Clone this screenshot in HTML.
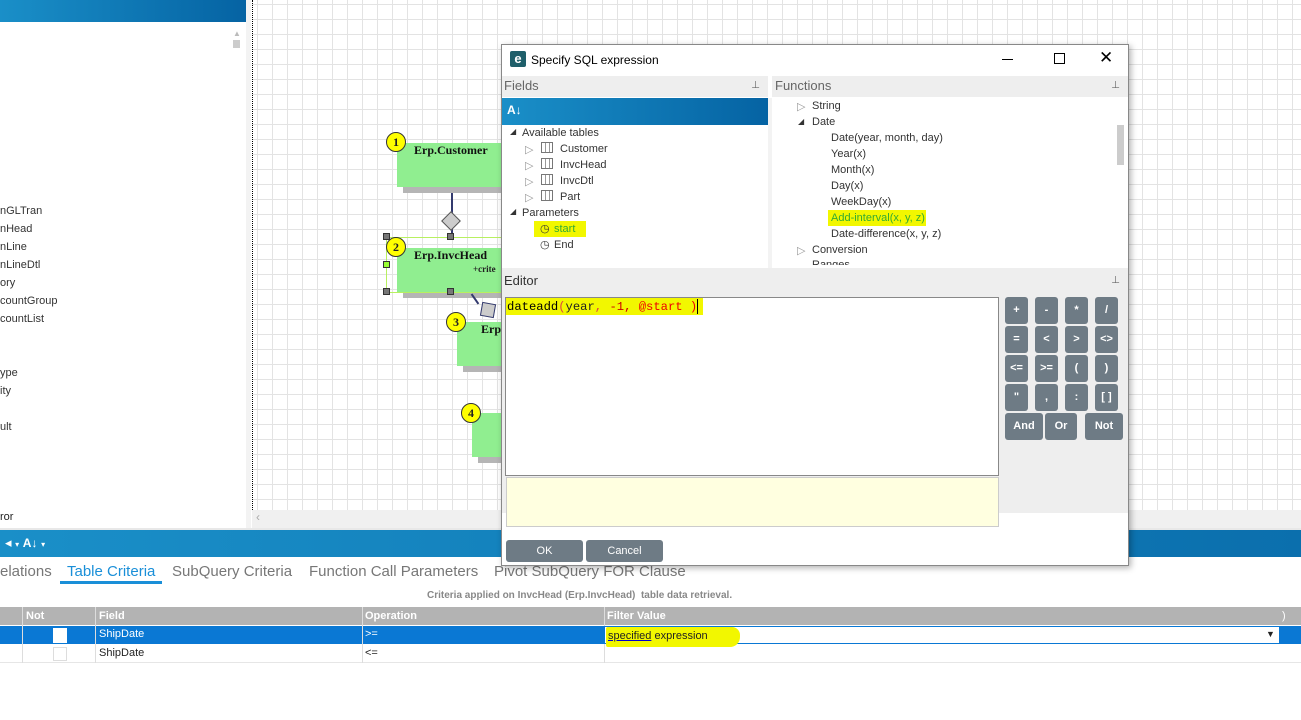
<!DOCTYPE html>
<html><head><style>
*{box-sizing:border-box;margin:0;padding:0}
body{width:1301px;height:720px;position:relative;overflow:hidden;background:#fff;font-family:"Liberation Sans",sans-serif;font-size:11px;color:#222}
.abs{position:absolute}
.grid{background-color:#fff;background-image:linear-gradient(to right,#e3e3e3 1px,transparent 1px),linear-gradient(to bottom,#e3e3e3 1px,transparent 1px);background-size:15px 15px;background-position:4px 4px}
.node{position:absolute;background:#90ee90;box-shadow:6px 6px 0 #b5b5b5}
.num{position:absolute;width:20px;height:20px;border-radius:50%;background:#ffff00;border:1px solid #333;font:bold 12px "Liberation Serif",serif;text-align:center;line-height:18px}
.nt{font:bold 12px "Liberation Serif",serif;color:#111;position:absolute}
.h{position:absolute;width:7px;height:7px;background:#777;border:1px solid #333}
.tree div{position:absolute;font-size:11px;color:#333;white-space:nowrap}
.btn{position:absolute;width:23px;height:27px;background:#6e7b85;border-radius:3px;color:#fff;font-weight:bold;font-size:11px;text-align:center;line-height:27px}
.tbl{position:absolute;font-size:11px}
</style></head><body>
<div class="abs" style="left:0;top:0;width:246px;height:22px;background:linear-gradient(to right,#1a8fc8,#0563a3)"></div>
<div class="abs" style="left:246px;top:0;width:5px;height:528px;background:#f3f3f3"></div>
<div class="abs" style="left:233px;top:40px;width:7px;height:8px;background:#ccc"></div>
<div class="abs" style="left:233px;top:29px;color:#bbb;font-size:8px">▲</div>
<div class="abs" style="left:232px;top:511px;color:#bbb;font-size:8px">▼</div>
<div class="tree">
<div style="left:0;top:205px">nGLTran</div><div style="left:0;top:223px">nHead</div><div style="left:0;top:241px">nLine</div><div style="left:0;top:259px">nLineDtl</div><div style="left:0;top:277px">ory</div><div style="left:0;top:295px">countGroup</div><div style="left:0;top:313px">countList</div><div style="left:0;top:367px">ype</div><div style="left:0;top:385px">ity</div><div style="left:0;top:421px">ult</div>
</div>
<div class="abs grid" style="left:252px;top:0;width:1049px;height:510px;border-left:1px dotted #000"></div>
<div class="abs" style="left:252px;top:510px;width:1049px;height:18px;background:#f0f0f0;color:#aaa;padding-left:4px;font-size:12px">‹</div>
<div class="abs" style="left:0;top:510px;width:246px;height:18px;background:#fff"></div>
<div class="abs" style="left:0;top:511px;font-size:11px">ror</div>
<div class="abs" style="left:0;top:528px;width:1301px;height:2px;background:#e8e8e8"></div>
<div class="abs" style="left:451px;top:187px;width:2px;height:50px;background:#333a6e"></div>
<div class="abs" style="left:444px;top:214px;width:14px;height:14px;background:#ccc;border:1.5px solid #555;transform:rotate(45deg)"></div>
<div class="node" style="left:397px;top:143px;width:110px;height:44px"></div>
<div class="num" style="left:386px;top:132px">1</div>
<div class="nt" style="left:414px;top:143px">Erp.Customer</div>
<div class="node" style="left:397px;top:248px;width:110px;height:44px"></div>
<div class="abs" style="left:386px;top:237px;width:120px;height:56px;border:1px solid #b8f060"></div>
<div class="num" style="left:386px;top:237px">2</div>
<div class="nt" style="left:414px;top:248px">Erp.InvcHead</div>
<div class="abs" style="left:473px;top:264px;font:bold 9px 'Liberation Serif',serif">+crite</div>
<div class="h" style="left:383px;top:233px"></div><div class="h" style="left:447px;top:233px"></div>
<div class="h" style="left:383px;top:288px"></div><div class="h" style="left:447px;top:288px"></div>
<div class="h" style="left:383px;top:261px;background:#9f3"></div>
<div class="abs" style="left:474px;top:293px;width:2px;height:12px;background:#333a6e;transform:rotate(-35deg)"></div>
<div class="abs" style="left:481px;top:303px;width:14px;height:14px;background:#ccc;border:1.5px solid #333a6e;transform:rotate(10deg)"></div>
<div class="node" style="left:457px;top:322px;width:50px;height:44px"></div>
<div class="num" style="left:446px;top:312px">3</div>
<div class="nt" style="left:481px;top:322px">Erp</div>
<div class="node" style="left:472px;top:413px;width:40px;height:44px"></div>
<div class="num" style="left:461px;top:403px">4</div>
<div class="abs" style="left:0;top:530px;width:1301px;height:27px;background:linear-gradient(to right,#1a8fc8,#0b6fad)"></div>
<div class="abs" style="left:5px;top:535px;color:#fff;font-size:13px">◂ <span style="font-size:8px">▾</span> <b style="font-size:12px">A↓</b> <span style="font-size:8px">▾</span></div>
<div class="abs" style="left:0;top:563px;font-size:15px;color:#777;white-space:nowrap">elations</div>
<div class="abs" style="left:67px;top:563px;font-size:15px;color:#1a8fd8">Table Criteria</div>
<div class="abs" style="left:60px;top:581px;width:102px;height:3px;background:#1a8fd8"></div>
<div class="abs" style="left:172px;top:563px;font-size:15px;color:#777">SubQuery Criteria</div>
<div class="abs" style="left:309px;top:563px;font-size:15px;color:#777">Function Call Parameters</div>
<div class="abs" style="left:494px;top:563px;font-size:15px;color:#777">Pivot SubQuery FOR Clause</div>
<div class="abs" style="left:427px;top:590px;font-size:10px;color:#888;font-weight:bold">Criteria applied on InvcHead (Erp.InvcHead)&nbsp; table data retrieval.</div>
<div class="abs" style="left:0;top:607px;width:1301px;height:18px;background:#b3b3b3"></div>
<div class="abs" style="left:0;top:626px;width:1301px;height:18px;background:#0a78d4"></div>
<div class="abs" style="left:0;top:662px;width:1301px;height:1px;background:#e6e6e6"></div>
<div class="tbl" style="left:26px;top:610px;color:#fff;font-weight:bold">Not</div>
<div class="tbl" style="left:99px;top:610px;color:#fff;font-weight:bold">Field</div>
<div class="tbl" style="left:365px;top:610px;color:#fff;font-weight:bold">Operation</div>
<div class="tbl" style="left:607px;top:610px;color:#fff;font-weight:bold">Filter Value</div>
<div class="tbl" style="left:1282px;top:610px;color:#fff">)</div>
<div class="abs" style="left:22px;top:607px;width:1px;height:56px;background:#ddd"></div>
<div class="abs" style="left:95px;top:607px;width:1px;height:56px;background:#ddd"></div>
<div class="abs" style="left:362px;top:607px;width:1px;height:56px;background:#ddd"></div>
<div class="abs" style="left:604px;top:607px;width:1px;height:56px;background:#ddd"></div>
<div class="abs" style="left:53px;top:628px;width:14px;height:15px;background:#fff"></div>
<div class="abs" style="left:53px;top:647px;width:14px;height:14px;border:1px solid #ddd"></div>
<div class="tbl" style="left:99px;top:628px;color:#fff">ShipDate</div>
<div class="tbl" style="left:365px;top:628px;color:#fff">&gt;=</div>
<div class="tbl" style="left:99px;top:647px">ShipDate</div>
<div class="tbl" style="left:365px;top:647px">&lt;=</div>
<div class="abs" style="left:604px;top:626px;width:676px;height:18px;background:#fff;border:1px solid #0a78d4"></div>
<div class="abs" style="left:606px;top:627px;width:134px;height:20px;background:#f2f700;border-radius:2px 8px 10px 2px"></div>
<div class="tbl" style="left:608px;top:630px"><u style="text-decoration-color:#00c">specified</u> expression</div>
<div class="tbl" style="left:1266px;top:629px;font-size:9px">▼</div>
<div class="abs" style="left:501px;top:44px;width:628px;height:522px;background:#fff;border:1px solid #888;box-shadow:2px 2px 6px rgba(0,0,0,.3)">
 <div class="abs" style="left:8px;top:6px;width:16px;height:16px;background:#1f5f6a;border-radius:2px;color:#fff;font-weight:bold;font-size:13px;line-height:15px;text-align:center">e</div>
 <div class="abs" style="left:29px;top:8px;font-size:12px;color:#000">Specify SQL expression</div>
 <div class="abs" style="left:500px;top:14px;width:11px;height:1px;background:#000"></div>
 <div class="abs" style="left:552px;top:8px;width:11px;height:11px;border:1px solid #000"></div>
 <div class="abs" style="left:597px;top:3px;font-size:17px;color:#000">✕</div>
 <div class="abs" style="left:0;top:31px;width:266px;height:21px;background:#eee"><span style="position:absolute;left:2px;top:2px;font-size:13px;color:#666">Fields</span><span style="position:absolute;right:8px;top:4px;font-size:10px;color:#666">⊥</span></div>
 <div class="abs" style="left:270px;top:31px;width:356px;height:21px;background:#eee"><span style="position:absolute;left:3px;top:2px;font-size:13px;color:#666">Functions</span><span style="position:absolute;right:8px;top:4px;font-size:10px;color:#666">⊥</span></div>
 <div class="abs" style="left:0;top:53px;width:266px;height:27px;background:linear-gradient(to right,#1a8fc8,#0563a3);color:#fff;font-size:12px;padding:5px 5px;font-weight:bold">A↓</div>
 <div class="abs" style="left:266px;top:53px;width:4px;height:170px;background:#f3f3f3"></div>
 <div class="tree">
  <div style="left:8px;top:82px;font-size:8px">◢</div><div style="left:20px;top:82px">Available tables</div>
  <div style="left:23px;top:98px;color:#999">▷</div><div style="left:39px;top:97px;width:12px;height:11px;border:1px solid #777;background:repeating-linear-gradient(to right,#fff 0 3px,#999 3px 4px)"></div><div style="left:58px;top:98px">Customer</div>
  <div style="left:23px;top:114px;color:#999">▷</div><div style="left:39px;top:113px;width:12px;height:11px;border:1px solid #777;background:repeating-linear-gradient(to right,#fff 0 3px,#999 3px 4px)"></div><div style="left:58px;top:114px">InvcHead</div>
  <div style="left:23px;top:130px;color:#999">▷</div><div style="left:39px;top:129px;width:12px;height:11px;border:1px solid #777;background:repeating-linear-gradient(to right,#fff 0 3px,#999 3px 4px)"></div><div style="left:58px;top:130px">InvcDtl</div>
  <div style="left:23px;top:146px;color:#999">▷</div><div style="left:39px;top:145px;width:12px;height:11px;border:1px solid #777;background:repeating-linear-gradient(to right,#fff 0 3px,#999 3px 4px)"></div><div style="left:58px;top:146px">Part</div>
  <div style="left:8px;top:162px;font-size:8px">◢</div><div style="left:20px;top:162px">Parameters</div>
  <div style="left:32px;top:176px;width:52px;height:16px;background:#f2f700"></div>
  <div style="left:38px;top:177px">◷</div><div style="left:52px;top:178px;color:#3a3">start</div>
  <div style="left:38px;top:193px">◷</div><div style="left:52px;top:194px">End</div>
  <div style="left:295px;top:55px;color:#999">▷</div><div style="left:310px;top:55px">String</div>
  <div style="left:296px;top:72px;font-size:8px">◢</div><div style="left:310px;top:71px">Date</div>
  <div style="left:329px;top:87px">Date(year, month, day)</div>
  <div style="left:329px;top:103px">Year(x)</div>
  <div style="left:329px;top:119px">Month(x)</div>
  <div style="left:329px;top:135px">Day(x)</div>
  <div style="left:329px;top:151px">WeekDay(x)</div>
  <div style="left:326px;top:165px;width:98px;height:16px;background:#f2f700"></div>
  <div style="left:329px;top:167px;color:#3a3">Add-interval(x, y, z)</div>
  <div style="left:329px;top:183px">Date-difference(x, y, z)</div>
  <div style="left:295px;top:199px;color:#999">▷</div><div style="left:310px;top:199px">Conversion</div>
  <div style="left:310px;top:214px;height:6px;overflow:hidden">Ranges</div>
 </div>
 <div class="abs" style="left:615px;top:80px;width:7px;height:40px;background:#ccc"></div>
 <div class="abs" style="left:0;top:223px;width:626px;height:245px;background:#eee"></div>
 <div class="abs" style="left:2px;top:228px;font-size:13px;color:#333">Editor</div>
 <div class="abs" style="right:8px;top:230px;font-size:10px;color:#666">⊥</div>
 <div class="abs" style="left:3px;top:252px;width:494px;height:179px;background:#fff;border:1px solid #888"></div>
 <div class="abs" style="left:4px;top:253px;width:197px;height:17px;background:#f2f700"></div>
 <div class="abs" style="left:5px;top:255px;font:12.2px 'Liberation Mono',monospace;white-space:pre"><span style="color:#000">dateadd</span><span style="color:#d44">(</span>year<span style="color:#d44">,</span> <span style="color:#c00">-1,</span> <span style="color:#e00">@start )</span></div>
 <div class="abs" style="left:195px;top:254px;width:1px;height:15px;background:#000"></div>
 <div class="abs" style="left:4px;top:432px;width:493px;height:50px;background:#ffffe0;border:1px solid #ccc"></div>
 <div class="btn" style="left:503px;top:252px">+</div><div class="btn" style="left:533px;top:252px">-</div><div class="btn" style="left:563px;top:252px">*</div><div class="btn" style="left:593px;top:252px">/</div>
 <div class="btn" style="left:503px;top:281px">=</div><div class="btn" style="left:533px;top:281px">&lt;</div><div class="btn" style="left:563px;top:281px">&gt;</div><div class="btn" style="left:593px;top:281px">&lt;&gt;</div>
 <div class="btn" style="left:503px;top:310px">&lt;=</div><div class="btn" style="left:533px;top:310px">&gt;=</div><div class="btn" style="left:563px;top:310px">(</div><div class="btn" style="left:593px;top:310px">)</div>
 <div class="btn" style="left:503px;top:339px">"</div><div class="btn" style="left:533px;top:339px">,</div><div class="btn" style="left:563px;top:339px">:</div><div class="btn" style="left:593px;top:339px">[ ]</div>
 <div class="btn" style="left:503px;top:368px;width:38px">And</div><div class="btn" style="left:543px;top:368px;width:32px">Or</div><div class="btn" style="left:583px;top:368px;width:38px">Not</div>
 <div class="btn" style="left:4px;top:495px;width:77px;height:22px;line-height:22px;font-weight:normal">OK</div>
 <div class="btn" style="left:84px;top:495px;width:77px;height:22px;line-height:22px;font-weight:normal">Cancel</div>
</div>
</body></html>
